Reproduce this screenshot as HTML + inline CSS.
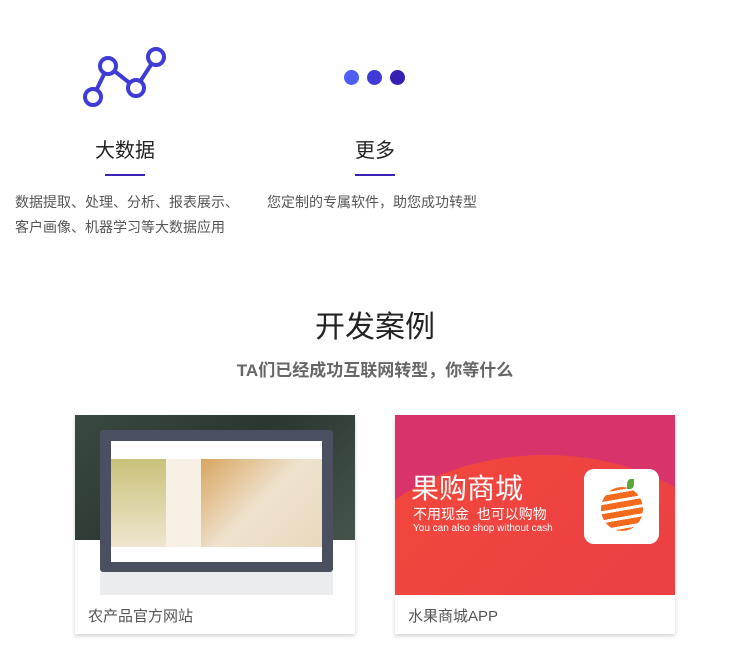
<!DOCTYPE html>
<html><head><meta charset="utf-8"><style>
*{margin:0;padding:0;box-sizing:border-box}
html{width:750px;height:650px;overflow:hidden}
body{width:750px;height:650px;background:#fff;font-family:"Liberation Sans","Noto Sans CJK SC",sans-serif;position:relative;overflow:hidden}
.a{position:absolute}
.t{font-size:20px;color:#222;text-align:center}
.line{height:2px;background:#3b22b8;width:40px}
.d{font-size:14px;color:#555;line-height:25px}
.card{position:absolute;top:415px;width:280px;height:219px;background:#fff;box-shadow:0 2px 4px rgba(0,0,0,.18)}
.lab{position:absolute;left:13px;top:190px;font-size:15px;color:#555}
</style></head><body>
<svg class="a" style="left:80px;top:44px" width="90" height="64" viewBox="80 44 90 64">
<polyline points="93,97 108,66 136,88 156,57" fill="none" stroke="#3f3bd6" stroke-width="4"/>
<g fill="#fff" stroke="#3f3bd6" stroke-width="4"><circle cx="93" cy="97" r="8"/><circle cx="108" cy="66" r="8"/><circle cx="136" cy="88" r="8"/><circle cx="156" cy="57" r="8"/></g>
</svg>
<div class="a" style="left:344px;top:70px;width:15px;height:15px;border-radius:50%;background:#4f5df0"></div>
<div class="a" style="left:367px;top:70px;width:15px;height:15px;border-radius:50%;background:#3f3bd6"></div>
<div class="a" style="left:390px;top:70px;width:15px;height:15px;border-radius:50%;background:#3520b5"></div>
<div class="a t" style="left:75px;top:134px;width:100px">大数据</div>
<div class="a line" style="left:105px;top:174px"></div>
<div class="a t" style="left:325px;top:134px;width:100px">更多</div>
<div class="a line" style="left:355px;top:174px"></div>
<div class="a d" style="left:15px;top:190px">数据提取、处理、分析、报表展示、<br>客户画像、机器学习等大数据应用</div>
<div class="a d" style="left:267px;top:190px">您定制的专属软件，助您成功转型</div>
<div class="a" style="left:0;top:302px;width:750px;text-align:center;font-size:30px;color:#222">开发案例</div>
<div class="a" style="left:0;top:356px;width:750px;text-align:center;font-size:17px;color:#666;font-weight:bold">TA们已经成功互联网转型，你等什么</div>
<div class="card" style="left:75px">
<div class="a" style="left:0;top:0;width:280px;height:125px;background:linear-gradient(135deg,#3a4a40,#2a3630 50%,#45554c)"></div>
<div class="a" style="left:25px;top:15px;width:233px;height:142px;background:#4a5060;border-radius:3px"></div>
<div class="a" style="left:25px;top:157px;width:233px;height:23px;background:#ebecee"></div>
<div class="a" style="left:36px;top:26px;width:211px;height:121px;background:#fff"></div>
<div class="a" style="left:36px;top:44px;width:55px;height:88px;background:linear-gradient(#c9c27a,#efe6d0)"></div>
<div class="a" style="left:91px;top:44px;width:35px;height:88px;background:#f7f1e5"></div>
<div class="a" style="left:126px;top:44px;width:121px;height:88px;background:linear-gradient(135deg,#d8a560,#efe3cf 50%,#e9d8bd)"></div>
<div class="lab">农产品官方网站</div>
</div>
<div class="card" style="left:395px">
<div class="a" style="left:0;top:0;width:280px;height:180px;overflow:hidden;background:#d8336a">
<div class="a" style="left:-60px;top:40px;width:420px;height:300px;border-radius:50% 50% 0 0;background:linear-gradient(135deg,#f2493a,#e83a4a)"></div>
<div class="a" style="left:16px;top:52px;font-size:28px;color:#fff">果购商城</div>
<div class="a" style="left:18px;top:89px;font-size:14px;color:#fff">不用现金&nbsp;&nbsp;也可以购物</div>
<div class="a" style="left:18px;top:108px;font-size:10px;color:#fff">You can also shop without cash</div>
<div class="a" style="left:189px;top:54px;width:75px;height:75px;background:#fff;border-radius:10px"></div>
<div class="a" style="left:206px;top:72px;width:42px;height:44px;border-radius:50%;background:repeating-linear-gradient(170deg,#f36a1e 0 6px,#fff 6px 9px)"></div>
<div class="a" style="left:232px;top:64px;width:7px;height:10px;background:#5aa63a;border-radius:50% 0"></div>
</div>
<div class="lab">水果商城APP</div>
</div>
</body></html>
